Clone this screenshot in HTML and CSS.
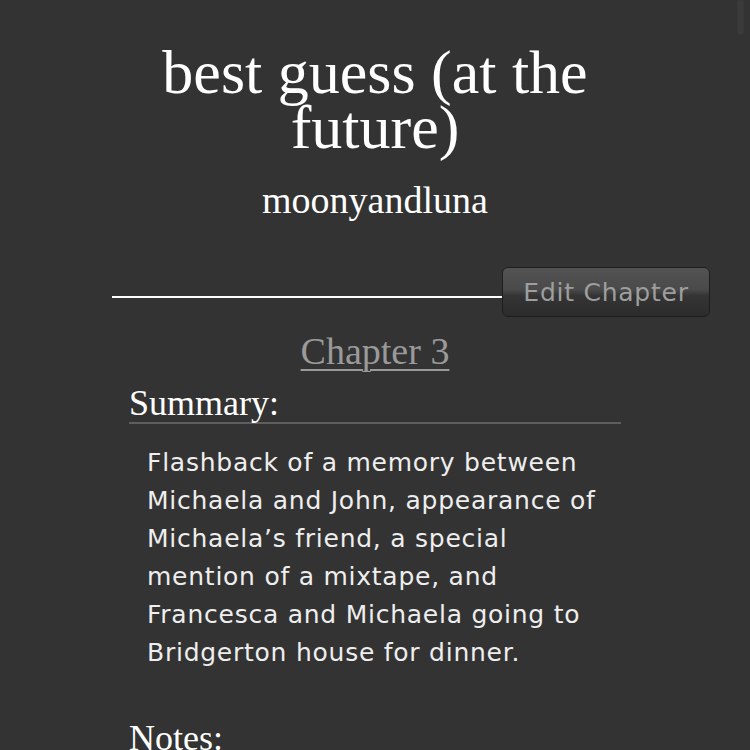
FILE: index.html
```html
<!DOCTYPE html>
<html lang="en">
<head>
<meta charset="utf-8">
<title>best guess (at the future) - Chapter 3</title>
<link rel="stylesheet" href="styles.css">
</head>
<body>
  <div class="scroll-thumb"></div>
  <header class="work-header">
    <h1 class="work-title">best guess (at the future)</h1>
    <p class="work-author">moonyandluna</p>
  </header>

  <div class="chapter-bar">
    <span class="chapter-rule"></span>
    <button class="edit-btn" type="button">Edit Chapter</button>
  </div>

  <h2 class="chapter-title"><a href="#">Chapter 3</a></h2>

  <section class="chapter-meta">
    <h3 class="meta-heading">Summary:</h3>
    <p class="meta-text">Flashback of a memory between Michaela and John, appearance of Michaela’s friend, a special mention of a mixtape, and Francesca and Michaela going to Bridgerton house for dinner.</p>
    <h3 class="meta-heading notes">Notes:</h3>
  </section>
</body>
</html>
```

FILE: styles.css
```css
html {
  overflow: hidden;
}

body {
  margin: 0;
  background: #333333;
  color: #ffffff;
  font-family: "Liberation Serif", "Times New Roman", serif;
}

/* overlay scrollbar thumb at the top right */
.scroll-thumb {
  position: fixed;
  top: 0;
  right: 6px;
  width: 7px;
  height: 35px;
  border-radius: 0 0 4px 4px;
  background: #3b3b3b;
  box-shadow: inset 0 0 0 1px #383838;
}

.work-header {
  text-align: center;
  padding-top: 45px;
}

.work-title {
  margin: 0 auto;
  max-width: 480px;
  font-size: 62px;
  font-weight: normal;
  line-height: 55px;
}

.work-author {
  margin: 23px 0 0;
  font-size: 38px;
  line-height: 44px;
}

.chapter-bar {
  display: flex;
  align-items: center;
  margin-top: 45px;
  padding: 0 40px 0 112px;
}

.chapter-rule {
  flex: 1;
  height: 2px;
  margin-top: 10px;
  background: #ffffff;
}

.edit-btn {
  width: 208px;
  height: 50px;
  padding: 0;
  border: 1px solid #1e1e1e;
  border-radius: 6px;
  background: linear-gradient(#535353 0%, #4a4a4a 45%, #343434 58%, #2c2c2c 100%);
  color: #9e9e9e;
  font-family: "DejaVu Sans", Verdana, sans-serif;
  font-size: 25px;
  letter-spacing: 0.75px;
  cursor: pointer;
}

.chapter-title {
  margin: 12px 0 0;
  text-align: center;
  font-size: 38px;
  font-weight: normal;
  line-height: 44px;
}

.chapter-title a {
  color: #9a9a9a;
  text-decoration: underline;
  text-decoration-thickness: 2px;
  text-underline-offset: 5px;
}

.chapter-meta {
  width: 492px;
  margin: 11px auto 0;
}

.meta-heading {
  margin: 0;
  font-size: 36px;
  font-weight: normal;
  line-height: 38px;
  border-bottom: 2px solid #5e5e5e;
}

.meta-heading.notes {
  margin-top: 47px;
}

.meta-text {
  margin: 20px 0 0;
  padding: 0 14px 0 18px;
  color: #eeeeee;
  font-family: "DejaVu Sans", Verdana, sans-serif;
  font-size: 25px;
  letter-spacing: 0.75px;
  line-height: 38px;
}
```
